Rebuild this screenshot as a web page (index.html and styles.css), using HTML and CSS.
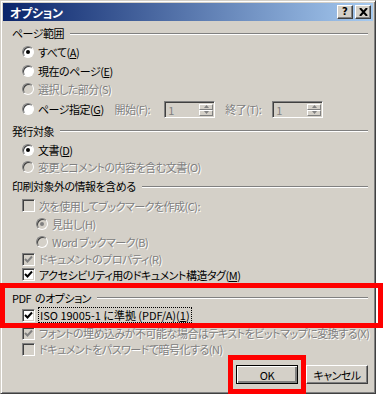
FILE: index.html
```html
<!DOCTYPE html>
<html lang="ja">
  <head>
    <meta charset="utf-8" />
    <title>オプション</title>
    <link rel="stylesheet" href="styles.css">
  </head>
  <body>
    <div class="dialog">
      <div class="titlebar">
        <span class="title">オプション</span>
        <span class="tbtn">?</span>
        <span class="tbtn close">
          <svg width="9" height="8" viewBox="0 0 9 8"><path d="M1 0 L8 8 M8 0 L1 8" stroke="#000" stroke-width="2"/></svg>
        </span>
      </div>

      <div class="content">
        <div class="group-title first"><span>ページ範囲</span></div>
        <div class="opt"><span class="radio on"></span><span>すべて(<u>A</u>)</span></div>
        <div class="opt h19"><span class="radio"></span><span>現在のページ(<u>E</u>)</span></div>
        <div class="opt off"><span class="radio"></span><span>選択した部分(S)</span></div>
        <div class="opt spin-row">
          <span class="radio"></span><span>ページ指定(<u>G</u>)</span>
          <span class="spin-label">開始(F):</span>
          <span class="spin">
            <span class="val">1</span>
            <span class="arrows">
              <i><svg width="5" height="3" viewBox="0 0 5 3"><path d="M2.5 0 L5 3 L0 3z" fill="#808080"/></svg></i>
              <i><svg width="5" height="3" viewBox="0 0 5 3"><path d="M0 0 L5 0 L2.5 3z" fill="#808080"/></svg></i>
            </span>
          </span>
          <span class="spin-label end">終了(T):</span>
          <span class="spin">
            <span class="val">1</span>
            <span class="arrows">
              <i><svg width="5" height="3" viewBox="0 0 5 3"><path d="M2.5 0 L5 3 L0 3z" fill="#808080"/></svg></i>
              <i><svg width="5" height="3" viewBox="0 0 5 3"><path d="M0 0 L5 0 L2.5 3z" fill="#808080"/></svg></i>
            </span>
          </span>
        </div>

        <div class="group-title"><span>発行対象</span></div>
        <div class="opt h17"><span class="radio on"></span><span>文書(<u>D</u>)</span></div>
        <div class="opt h17 off"><span class="radio"></span><span>変更とコメントの内容を含む文書(O)</span></div>

        <div class="group-title tall"><span>印刷対象外の情報を含める</span></div>
        <div class="opt h17 off"><span class="check"></span><span>次を使用してブックマークを作成(C):</span></div>
        <div class="opt h19 off sub"><span class="radio on"></span><span>見出し(H)</span></div>
        <div class="opt off sub"><span class="radio"></span><span>Word ブックマーク(B)</span></div>
        <div class="opt h16 off"><span class="check on"><svg width="9" height="9" viewBox="0 0 9 9"><polyline points="1,4 3.5,6.5 8,1.5" fill="none" stroke="#808080" stroke-width="2"/></svg></span><span>ドキュメントのプロパティ(R)</span></div>
        <div class="opt h15"><span class="check on"><svg width="9" height="9" viewBox="0 0 9 9"><polyline points="1,4 3.5,6.5 8,1.5" fill="none" stroke="#000" stroke-width="2"/></svg></span><span>アクセシビリティ用のドキュメント構造タグ(<u>M</u>)</span></div>

        <div class="group-title pdf"><span>PDF&nbsp; のオプション</span></div>
        <div class="opt h20"><span class="check on"><svg width="9" height="9" viewBox="0 0 9 9"><polyline points="1,4 3.5,6.5 8,1.5" fill="none" stroke="#000" stroke-width="2"/></svg></span><span class="focus">ISO 19005-1 に準拠 (PDF/A)(<u>1</u>)</span></div>
        <div class="opt h16 off"><span class="check on"><svg width="9" height="9" viewBox="0 0 9 9"><polyline points="1,4 3.5,6.5 8,1.5" fill="none" stroke="#808080" stroke-width="2"/></svg></span><span>フォントの埋め込みが不可能な場合はテキストをビットマップに変換する(X)</span></div>
        <div class="opt h16 off"><span class="check"></span><span>ドキュメントをパスワードで暗号化する(N)</span></div>

        <div class="buttons">
          <span class="btn default">OK</span>
          <span class="btn">キャンセル</span>
        </div>
      </div>
    </div>

    <div class="mark mark-pdf"></div>
    <div class="mark mark-ok"></div>
  </body>
</html>
```
FILE: styles.css
```css
* {
  box-sizing: border-box;
}
body {
  margin: 0;
  width: 385px;
  height: 394px;
  background: #ffffff;
  font-family: "Noto Sans CJK JP", sans-serif;
  font-size: 11px;
  letter-spacing: -0.5px;
  font-feature-settings: "palt";
  color: #000;
  position: relative;
  overflow: hidden;
}
u {
  text-decoration: underline;
  text-underline-offset: 1px;
}
.dialog {
  width: 376px;
  height: 394px;
  background: #d4d0c8;
  border: 1px solid;
  border-color: #d4d0c8 #404040 #404040 #d4d0c8;
  box-shadow: inset 1px 1px #ffffff, inset -1px -1px #808080;
  padding: 2px;
}
.titlebar {
  height: 18px;
  background: linear-gradient(to right, #0a246a, #a6caf0);
  display: flex;
  align-items: center;
  gap: 2px;
  padding: 0 2px 0 7px;
  color: #ffffff;
}
.title {
  flex: 1;
  font-weight: bold;
  font-size: 12px;
  letter-spacing: -0.3px;
}
.tbtn {
  width: 16px;
  height: 14px;
  background: #d4d0c8;
  border: 1px solid;
  border-color: #ffffff #404040 #404040 #ffffff;
  box-shadow: inset -1px -1px #808080;
  color: #000;
  font-family: "DejaVu Sans", sans-serif;
  font-weight: bold;
  font-size: 10px;
  letter-spacing: 0;
  line-height: 12px;
  text-align: center;
}
.close {
  display: flex;
  align-items: center;
  justify-content: center;
}
.content {
  padding: 0 5px 0 9px;
}
.group-title {
  display: flex;
  align-items: center;
  height: 21px;
  gap: 6px;
  white-space: nowrap;
}
.group-title.first {
  height: 20px;
  margin-top: 2px;
}
.group-title.tall {
  height: 22px;
}
.group-title::after {
  content: "";
  flex: 1;
  border-top: 1px solid #808080;
  border-bottom: 1px solid #ffffff;
  margin-top: 1px;
}
.opt {
  display: flex;
  align-items: center;
  height: 18px;
  padding-left: 10px;
  gap: 4px;
  white-space: nowrap;
}
.opt.h15 { height: 15px; }
.opt.h16 { height: 16px; }
.opt.h17 { height: 17px; }
.opt.h19 { height: 19px; }
.opt.h20 { height: 20px; }
.opt.sub {
  padding-left: 24px;
}
.opt.off,
.spin-label {
  color: #808080;
  text-shadow: 1px 1px 0 #ffffff;
}
.radio {
  width: 12px;
  height: 12px;
  border-radius: 50%;
  background: #ffffff;
  border: 1px solid;
  border-color: #808080 #ffffff #ffffff #808080;
  box-shadow: inset 1px 1px #404040;
  display: flex;
  align-items: center;
  justify-content: center;
  flex: none;
}
.radio.on::after {
  content: "";
  width: 4px;
  height: 4px;
  border-radius: 50%;
  background: #000;
}
.off .radio {
  background: #d4d0c8;
}
.off .radio.on::after {
  background: #808080;
}
.check {
  width: 13px;
  height: 13px;
  background: #ffffff;
  border: 1px solid;
  border-color: #808080 #ffffff #ffffff #808080;
  box-shadow: inset 1px 1px #404040, inset -1px -1px #d4d0c8;
  display: flex;
  align-items: center;
  justify-content: center;
  flex: none;
}
.off .check {
  background: #d4d0c8;
}
.spin-row {
  height: 22px;
  gap: 0;
}
.spin-row > span:nth-child(2) {
  margin-left: 4px;
}
.spin-label {
  margin-left: 11px;
  margin-right: 14px;
}
.spin-label.end {
  margin-left: 10px;
  margin-right: 11px;
}
.spin {
  width: 51px;
  height: 17px;
  display: flex;
  border: 1px solid;
  border-color: #808080 #ffffff #ffffff #808080;
  box-shadow: inset 1px 1px #404040;
  background: #d4d0c8;
  padding: 2px 1px 1px 2px;
}
.spin .val {
  flex: 1;
  color: #808080;
  line-height: 12px;
  padding-left: 1px;
}
.arrows {
  width: 14px;
  display: flex;
  flex-direction: column;
}
.arrows i {
  flex: 1;
  display: flex;
  align-items: center;
  justify-content: center;
  border: 1px solid;
  border-color: #ffffff #808080 #808080 #ffffff;
}
.group-title.pdf {
  margin-top: 8px;
  height: 15px;
}
.focus {
  outline: 1px dotted #000;
  outline-offset: 0;
  padding: 0 1px;
  line-height: 14px;
  letter-spacing: 0;
}
.buttons {
  display: flex;
  justify-content: flex-end;
  gap: 8px;
  margin-top: 8px;
}
.btn {
  width: 62px;
  height: 19px;
  display: flex;
  align-items: center;
  justify-content: center;
  border: 1px solid;
  border-color: #ffffff #404040 #404040 #ffffff;
  box-shadow: inset -1px -1px #808080;
}
.btn.default {
  border: 1px solid #000;
  box-shadow: inset 1px 1px #ffffff, inset -2px -2px #808080;
}
.mark {
  position: absolute;
  border: 5px solid #ff0000;
}
.mark-pdf {
  left: 0;
  top: 283px;
  width: 383px;
  height: 45px;
}
.mark-ok {
  left: 228px;
  top: 355px;
  width: 78px;
  height: 39px;
}
```
